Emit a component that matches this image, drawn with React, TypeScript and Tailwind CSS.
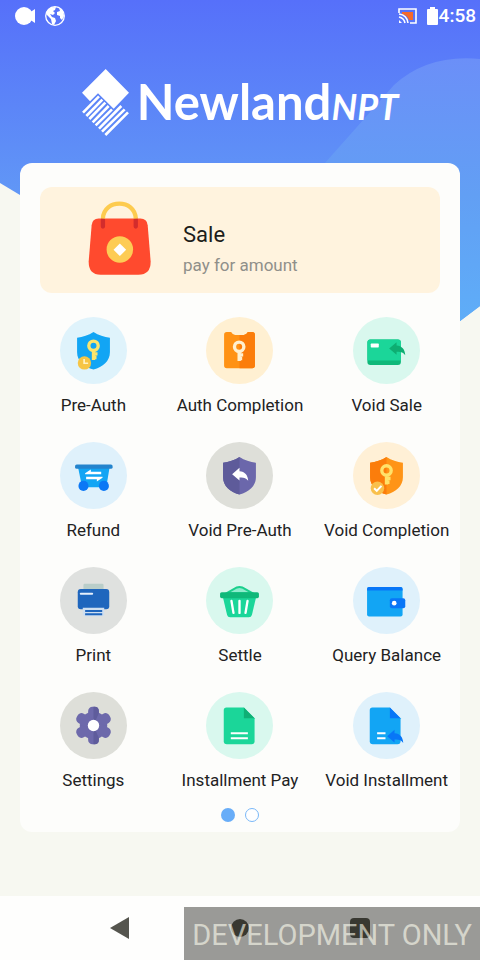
import type { ReactNode } from "react";

const KEY = "M-14 0a14 14 0 1 0 28 0a14 14 0 1 0 -28 0M0 14V42M0 24H12M0 35H9";
const SHIELD = "M100 45C115 55 132 60 149 62V105C149 132 128 148 100 157C72 148 51 132 51 105V62C68 60 85 55 100 45Z";
const SHIELD_HALF = "M100 45C85 55 68 60 51 62V105C51 132 72 148 100 157Z";
const REPLY = "M0 0L22 -19V-9C38 -8 47 2 48 20C41 11 34 9 22 10V19Z";

function Key({ x, y, color }: { x: number; y: number; color: string }) {
  return (
    <path d={KEY} transform={`translate(${x} ${y})`} fill="none" stroke={color} strokeWidth="10" />
  );
}

const tiles: { label: string; tint: string; art: ReactNode }[] = [
  {
    label: "Pre-Auth",
    tint: "#dff3fb",
    art: (
      <>
        <path d={SHIELD} fill="#12a5f4" />
        <Key x={100} y={86} color="#fbe56c" />
        <circle cx="73" cy="137" r="20" fill="#f6c545" />
        <path d="M72 125V138H84" fill="none" stroke="#fff3c4" strokeWidth="5" />
      </>
    ),
  },
  {
    label: "Auth Completion",
    tint: "#fff0d2",
    art: (
      <>
        <path d="M62 45H75Q80 54 87 54H113Q120 54 125 45H138Q146 45 146 53V145Q146 153 138 153H62Q54 153 54 145V53Q54 45 62 45Z" fill="#ff9214" />
        <path d="M100 54H113Q120 54 125 45H138Q146 45 146 53V145Q146 153 138 153H100Z" fill="#fb7d0b" />
        <Key x={99} y={89} color="#fff0cf" />
      </>
    ),
  },
  {
    label: "Void Sale",
    tint: "#d9f8ee",
    art: (
      <>
        <rect x="43" y="67" width="100" height="76" rx="9" fill="#0fb879" />
        <path d="M43 76Q43 67 52 67H134Q143 67 143 76V130H43Z" fill="#1bd699" />
        <rect x="53" y="79" width="24" height="12" rx="2" fill="#fff" />
        <path d={REPLY} transform="translate(108 94)" fill="#0eae72" />
      </>
    ),
  },
  {
    label: "Refund",
    tint: "#dff1fb",
    art: (
      <>
        <path d="M54 76H148L138 135H66Z" fill="#12a5f4" />
        <rect x="45" y="67" width="112" height="13" rx="5" fill="#2484cd" />
        <circle cx="70" cy="131" r="15" fill="#0b78f5" />
        <circle cx="131" cy="131" r="15" fill="#0b78f5" />
        <path d="M75 93L92 82V89H123V96H75ZM127 107L110 118V111H78V104H127Z" fill="#fff" />
      </>
    ),
  },
  {
    label: "Void Pre-Auth",
    tint: "#dedfd9",
    art: (
      <>
        <path d={SHIELD} fill="#6b67ab" />
        <path d={SHIELD_HALF} fill="#5e5b9a" />
        <path d={REPLY} transform="translate(78 96)" fill="#fff" />
      </>
    ),
  },
  {
    label: "Void Completion",
    tint: "#fff0d6",
    art: (
      <>
        <path d={SHIELD} fill="#ff9416" />
        <path d={SHIELD_HALF} fill="#fb7d0b" />
        <Key x={100} y={85} color="#ffe26a" />
        <circle cx="73" cy="138" r="20" fill="#f9c04c" />
        <path d="M63 138L71 146L85 131" fill="none" stroke="#fff" strokeWidth="6" />
      </>
    ),
  },
  {
    label: "Print",
    tint: "#dfe1df",
    art: (
      <>
        <rect x="70" y="50" width="60" height="26" rx="4" fill="#b9cdc9" />
        <rect x="53" y="66" width="94" height="60" rx="9" fill="#1f66bd" />
        <rect x="59" y="77" width="40" height="6" rx="3" fill="#e6f0fc" />
        <path d="M68 122H132V140Q132 147 125 147H75Q68 147 68 140Z" fill="#cfdff0" />
        <path d="M75 131H126M75 141H126" stroke="#1f66bd" strokeWidth="6" />
      </>
    ),
  },
  {
    label: "Settle",
    tint: "#d9f8ee",
    art: (
      <>
        <path d="M62 78L92 61Q100 58 108 61L138 78Z" fill="#8eeccd" stroke="#1bcf8c" strokeWidth="6" />
        <path d="M50 88H150L137 143Q135 150 128 150H72Q65 150 63 143Z" fill="#1bd699" />
        <rect x="42" y="75" width="116" height="18" rx="5" fill="#0fb879" />
        <path d="M76 101L82 137M100 101V137M124 101L118 137" stroke="#fff" strokeWidth="7" strokeLinecap="round" />
      </>
    ),
  },
  {
    label: "Query Balance",
    tint: "#dff1fb",
    art: (
      <>
        <rect x="42" y="60" width="106" height="88" rx="6" fill="#12a5f4" />
        <path d="M42 70V66Q42 60 48 60H142Q148 60 148 66V70Z" fill="#0876f7" />
        <rect x="110" y="93" width="46" height="30" rx="6" fill="#0876f7" />
        <circle cx="123" cy="108" r="7" fill="#fff" />
      </>
    ),
  },
  {
    label: "Settings",
    tint: "#dedfd9",
    art: (
      <>
        <g fill="#6d69ab">
          <circle cx="100" cy="100" r="41" />
          <rect x="84" y="44" width="32" height="112" rx="13" />
          <rect x="84" y="44" width="32" height="112" rx="13" transform="rotate(60 100 100)" />
          <rect x="84" y="44" width="32" height="112" rx="13" transform="rotate(120 100 100)" />
        </g>
        <path d="M100 44H104Q116 44 116 57V63L100 100V156H104Q116 156 116 143V137L100 100Z" fill="#5f5c9c" />
        <circle cx="100" cy="100" r="17" fill="#fff" />
      </>
    ),
  },
  {
    label: "Installment Pay",
    tint: "#d9f8ee",
    art: (
      <>
        <path d="M61 46H113L145 78V147Q145 156 136 156H62Q53 156 53 147V54Q53 46 61 46Z" fill="#1bd699" />
        <path d="M113 46L145 78H113Z" fill="#0fb075" />
        <path d="M74 123H125M74 138H125" stroke="#fff" strokeWidth="6" />
      </>
    ),
  },
  {
    label: "Void Installment",
    tint: "#dff1fb",
    art: (
      <>
        <path d="M58 46H110L142 78V147Q142 156 133 156H59Q50 156 50 147V54Q50 46 58 46Z" fill="#12a5f4" />
        <path d="M110 46L142 78H110Z" fill="#0876f7" />
        <path d="M72 123H97M72 138H97" stroke="#fff" strokeWidth="6" />
        <path d={REPLY} transform="translate(102 132)" fill="#0876f7" />
      </>
    ),
  },
];

function Backdrop() {
  return (
    <svg className="absolute inset-x-0 top-0 h-[400px] w-full" viewBox="0 0 480 400" preserveAspectRatio="none" aria-hidden="true">
      <defs>
        <linearGradient id="sky" x1="0" y1="0" x2="0" y2="1">
          <stop offset="0" stopColor="#5670fa" />
          <stop offset=".5" stopColor="#6198f6" />
          <stop offset="1" stopColor="#66b0fa" />
        </linearGradient>
        <linearGradient id="glow" x1="0" y1="0" x2="0" y2="1">
          <stop offset="0" stopColor="#6b8ff8" />
          <stop offset=".4" stopColor="#629ff4" />
          <stop offset="1" stopColor="#5cb6fa" />
        </linearGradient>
      </defs>
      <path d="M0 0H480V306L358 398L0 183Z" fill="url(#sky)" />
      <path d="M480 59Q428 54 394 85Q365 118 325 163L358 398L480 306Z" fill="url(#glow)" />
    </svg>
  );
}

function StatusBar() {
  return (
    <div className="flex h-8 items-center pl-[15px] pr-1">
      <svg className="h-5 w-5" viewBox="0 0 20 20" fill="#fff" aria-label="Recording">
        <circle cx="9" cy="10" r="9" />
        <path d="M14 7L20 3V17L14 13Z" />
      </svg>
      <svg className="ml-[10px] h-5 w-5" viewBox="0 0 20 20" aria-label="Network">
        <circle cx="10" cy="10" r="9.3" fill="none" stroke="#fff" strokeWidth="1.3" />
        <path d="M2 5L6 1.500L11 1L10 4L8 5L10 7L8 9L5 8L7 11L10 12L11 15L9 19L7 18L6 13L3 10L1 8ZM14 2L18 5L19 10L17 14L15 12L15 10L12 9L12 6L15 5Z" fill="#fff" />
      </svg>
      <div className="flex-1" />
      <svg className="h-4 w-[19px]" viewBox="0 0 19 16" fill="none" stroke="#fff" strokeWidth="1.6" aria-label="Cast">
        <path d="M4 4H15V12H11Q9 7 4 6Z" fill="#f56a2c" stroke="none" />
        <path d="M1 5V1H18V15H12M1 6Q9 7 10 15M1 9Q6 10 7 15" />
        <path d="M1 12L4 15H1Z" fill="#fff" stroke="none" />
      </svg>
      <svg className="ml-[10px] h-[18px] w-[11px]" viewBox="0 0 11 18" fill="#fff" aria-label="Battery">
        <path d="M3 0H8V2H10Q11 2 11 3V17Q11 18 10 18H1Q0 18 0 17V3Q0 2 1 2H3Z" />
      </svg>
      <span className="ml-px text-[19px] leading-8 font-medium text-white">4:58</span>
    </div>
  );
}

function Brand() {
  return (
    <h1 className="flex h-[131px] items-start justify-center pt-[37px] text-white">
      <svg className="h-[67px] w-[47px] shrink-0" viewBox="0 0 141 201" aria-hidden="true">
        <path d="M71 0L141 71L95 119L48 73L24 97L0 71Z" fill="#fff" />
        <path
          d="M3 131L51 82M13 141L61 92M22 150L70 101M32 160L80 111M41 169L90 121M51 179L118 111M60 188L128 121M70 198L138 130"
          stroke="#fff"
          strokeWidth="8"
        />
      </svg>
      <span className="ml-2 pt-0.5 font-['Lato',sans-serif] text-[49px] leading-[60px] font-bold">Newland</span>
      <span className="pt-[7px] font-['Lato',sans-serif] text-[36px] leading-[60px] font-bold italic">NPT</span>
    </h1>
  );
}

function Bag() {
  return (
    <svg className="h-[75px] w-[63px] shrink-0" viewBox="264 136 190 224" aria-hidden="true">
      <path d="M296 188H422Q442 188 444 208L453 318Q453 357 416 357H302Q266 357 266 318L275 208Q277 188 296 188Z" fill="#ff4a2e" />
      <path d="M309 190V212M408 190V212" stroke="#d32c2c" strokeWidth="13" strokeLinecap="round" />
      <path d="M309 188C311 128 406 128 408 188" fill="none" stroke="#fdcb4f" strokeWidth="13" />
      <circle cx="360" cy="281" r="40" fill="#fdcc55" />
      <path d="M360 263L379 282L360 301L341 282Z" fill="#fff" />
    </svg>
  );
}

export default function App() {
  return (
    <div className="relative flex min-h-screen flex-col bg-[#f7f8f1] font-['Roboto',sans-serif]">
      <Backdrop />
      <div className="relative flex flex-1 flex-col">
        <StatusBar />
        <Brand />
        <main className="mx-5 rounded-xl bg-[#fdfdfb] pt-6 pb-[10px]">
          <button type="button" className="mx-5 flex h-[106px] w-[calc(100%-40px)] items-start rounded-xl bg-[#fff3de] pt-[14px] pl-12 text-left">
            <Bag />
            <span className="ml-8 flex flex-col pt-5">
              <span className="text-[22px] leading-7 text-[#1d1d1a]">Sale</span>
              <span className="pt-0.5 text-[17px] leading-7 text-[#8f8f8a]">pay for amount</span>
            </span>
          </button>
          <div className="mt-6 grid grid-cols-3 gap-y-[23px]">
            {tiles.map((tile) => (
              <button key={tile.label} type="button" className="flex flex-col items-center">
                <svg className="h-[67px] w-[67px]" viewBox="0 0 200 200" aria-hidden="true">
                  <circle cx="100" cy="100" r="100" fill={tile.tint} />
                  {tile.art}
                </svg>
                <span className="mt-2 text-[17px] leading-[27px] whitespace-nowrap text-[#22221f]">{tile.label}</span>
              </button>
            ))}
          </div>
          <div className="mt-[14px] flex justify-center gap-[10px]">
            <button type="button" aria-label="Page 1" className="h-[14px] w-[14px] rounded-full bg-[#68adf8]" />
            <button type="button" aria-label="Page 2" className="h-[14px] w-[14px] rounded-full border border-[#7ab8f8] bg-white" />
          </div>
        </main>
      </div>
      <nav className="relative flex h-16 justify-center bg-[#fefefd]">
        <button type="button" aria-label="Back" className="flex w-1/4 items-center justify-center">
          <svg className="h-[22px] w-[20px]" viewBox="0 0 20 22" fill="#55554e" aria-hidden="true">
            <path d="M0 11L19 0V22Z" />
          </svg>
        </button>
        <button type="button" aria-label="Home" className="flex w-1/4 items-center justify-center">
          <span className="h-[18px] w-[18px] rounded-full bg-[#55554e]" />
        </button>
        <button type="button" aria-label="Recent apps" className="flex w-1/4 items-center justify-center">
          <span className="h-5 w-5 rounded-sm bg-[#55554e]" />
        </button>
        <div className="pointer-events-none absolute right-0 bottom-0 flex h-[53px] items-center bg-[#10100a]/42 px-2 pt-1 text-[29px] leading-[49px] whitespace-nowrap text-[#fffff0]/60">
          DEVELOPMENT ONLY
        </div>
      </nav>
    </div>
  );
}
